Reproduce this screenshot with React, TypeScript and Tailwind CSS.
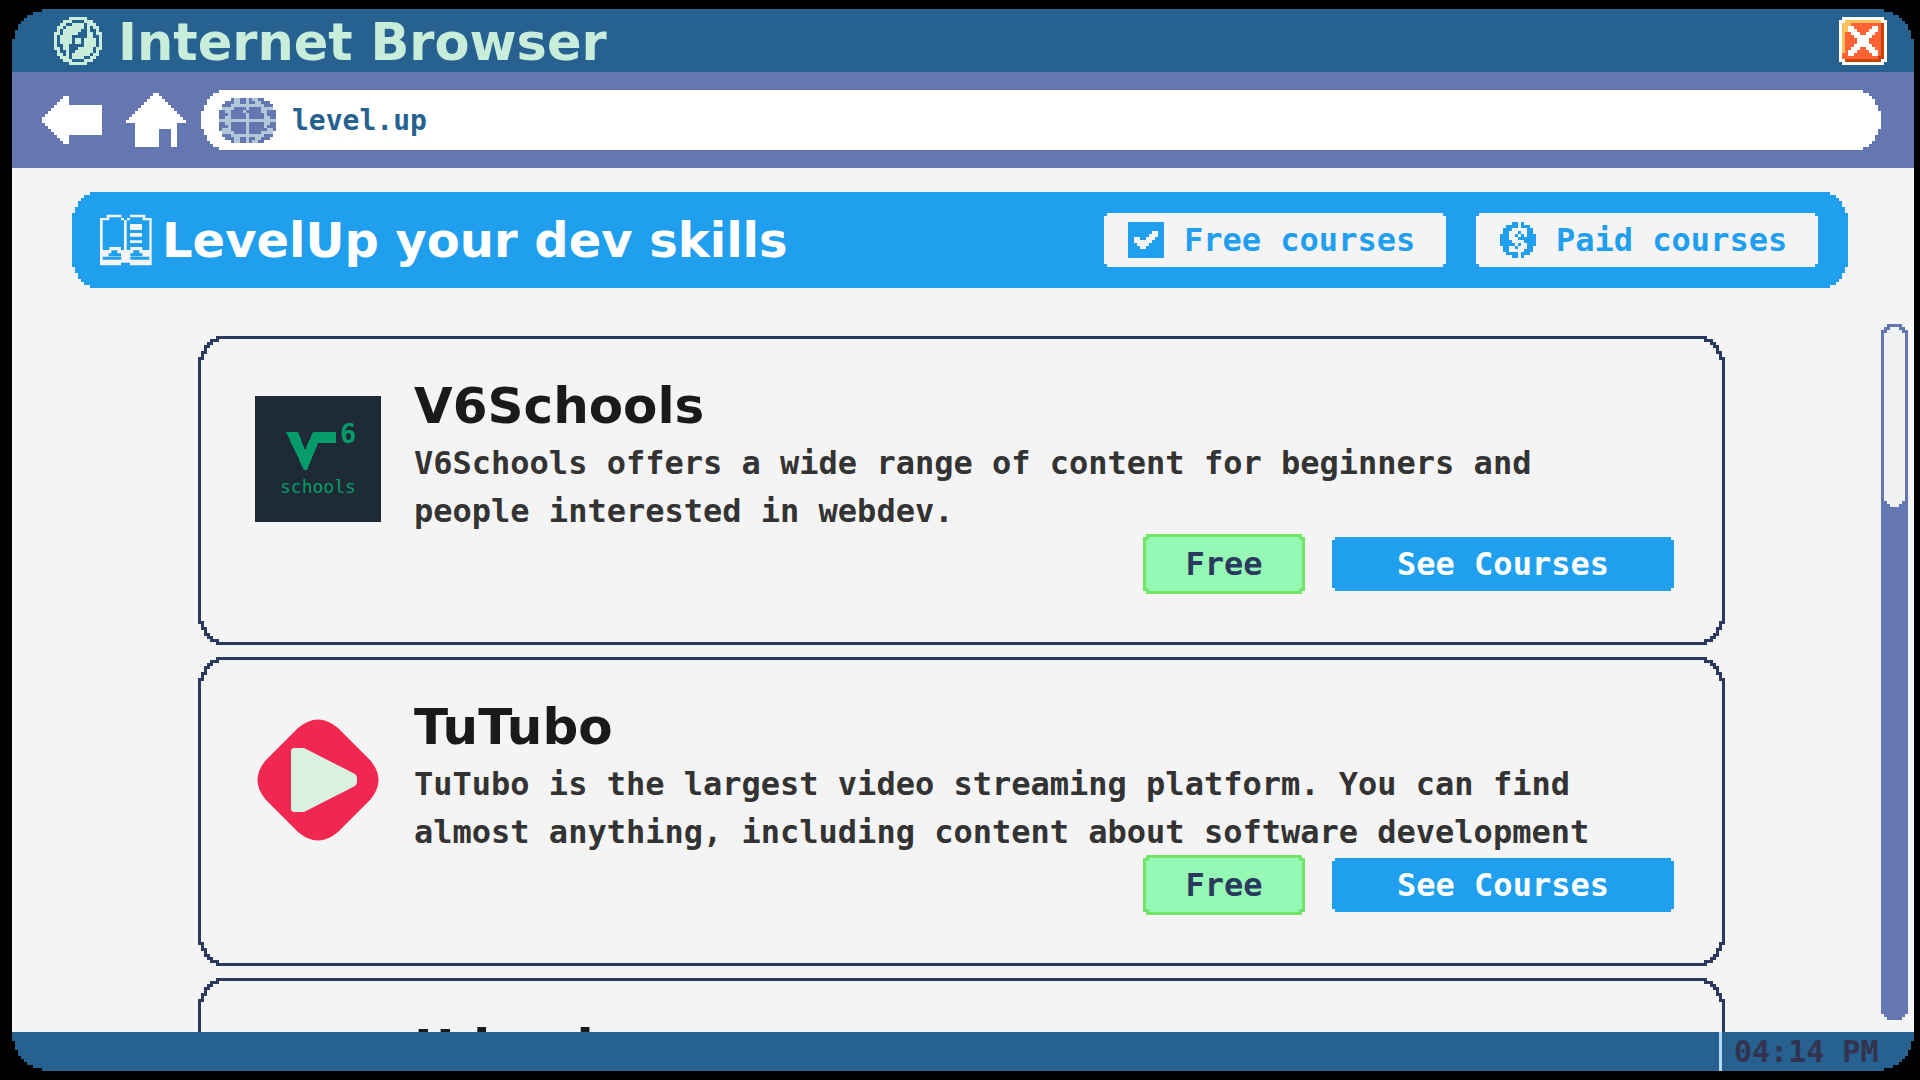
import React, { useState } from 'react';

interface Course {
    id: string;
    name: string;
    description?: string;
    price: string;
    logo?: React.ReactNode;
}

interface PixelIconProps {
    rows: string[];
    colors: Record<string, string>;
    className: string;
}

// Stepped corners, every step is a multiple of the 3px pixel unit
const WINDOW_CORNERS = '[clip-path:polygon(0_30px,3px_30px,3px_21px,6px_21px,6px_15px,9px_15px,9px_12px,12px_12px,12px_9px,15px_9px,15px_6px,21px_6px,21px_3px,30px_3px,30px_0,calc(100%-30px)_0,calc(100%-30px)_3px,calc(100%-21px)_3px,calc(100%-21px)_6px,calc(100%-15px)_6px,calc(100%-15px)_9px,calc(100%-12px)_9px,calc(100%-12px)_12px,calc(100%-9px)_12px,calc(100%-9px)_15px,calc(100%-6px)_15px,calc(100%-6px)_21px,calc(100%-3px)_21px,calc(100%-3px)_30px,100%_30px,100%_calc(100%-30px),calc(100%-3px)_calc(100%-30px),calc(100%-3px)_calc(100%-21px),calc(100%-6px)_calc(100%-21px),calc(100%-6px)_calc(100%-15px),calc(100%-9px)_calc(100%-15px),calc(100%-9px)_calc(100%-12px),calc(100%-12px)_calc(100%-12px),calc(100%-12px)_calc(100%-9px),calc(100%-15px)_calc(100%-9px),calc(100%-15px)_calc(100%-6px),calc(100%-21px)_calc(100%-6px),calc(100%-21px)_calc(100%-3px),calc(100%-30px)_calc(100%-3px),calc(100%-30px)_100%,30px_100%,30px_calc(100%-3px),21px_calc(100%-3px),21px_calc(100%-6px),15px_calc(100%-6px),15px_calc(100%-9px),12px_calc(100%-9px),12px_calc(100%-12px),9px_calc(100%-12px),9px_calc(100%-15px),6px_calc(100%-15px),6px_calc(100%-21px),3px_calc(100%-21px),3px_calc(100%-30px),0_calc(100%-30px))]';

const ROUND_CORNERS = '[clip-path:polygon(0_21px,3px_21px,3px_15px,6px_15px,6px_9px,9px_9px,9px_6px,12px_6px,12px_3px,18px_3px,18px_0,calc(100%-18px)_0,calc(100%-18px)_3px,calc(100%-12px)_3px,calc(100%-12px)_6px,calc(100%-9px)_6px,calc(100%-9px)_9px,calc(100%-6px)_9px,calc(100%-6px)_15px,calc(100%-3px)_15px,calc(100%-3px)_21px,100%_21px,100%_calc(100%-21px),calc(100%-3px)_calc(100%-21px),calc(100%-3px)_calc(100%-15px),calc(100%-6px)_calc(100%-15px),calc(100%-6px)_calc(100%-9px),calc(100%-9px)_calc(100%-9px),calc(100%-9px)_calc(100%-6px),calc(100%-12px)_calc(100%-6px),calc(100%-12px)_calc(100%-3px),calc(100%-18px)_calc(100%-3px),calc(100%-18px)_100%,18px_100%,18px_calc(100%-3px),12px_calc(100%-3px),12px_calc(100%-6px),9px_calc(100%-6px),9px_calc(100%-9px),6px_calc(100%-9px),6px_calc(100%-15px),3px_calc(100%-15px),3px_calc(100%-21px),0_calc(100%-21px))]';

const BAR_CORNERS = '[clip-path:polygon(0_6px,3px_6px,3px_3px,6px_3px,6px_0,calc(100%-6px)_0,calc(100%-6px)_3px,calc(100%-3px)_3px,calc(100%-3px)_6px,100%_6px,100%_calc(100%-6px),calc(100%-3px)_calc(100%-6px),calc(100%-3px)_calc(100%-3px),calc(100%-6px)_calc(100%-3px),calc(100%-6px)_100%,6px_100%,6px_calc(100%-3px),3px_calc(100%-3px),3px_calc(100%-6px),0_calc(100%-6px))]';

const NOTCH_CORNERS = '[clip-path:polygon(0_3px,3px_3px,3px_0,calc(100%-3px)_0,calc(100%-3px)_3px,100%_3px,100%_calc(100%-3px),calc(100%-3px)_calc(100%-3px),calc(100%-3px)_100%,3px_100%,3px_calc(100%-3px),0_calc(100%-3px))]';

const COMPASS = [
    '.....######.....',
    '...###....###...',
    '..##..####.###..',
    '.##.######.#.##.',
    '.#.######..#..#.',
    '##.#####...##.##',
    '#.####.....##..#',
    '#.####.##.####.#',
    '#.####.##.####.#',
    '#..##.....####.#',
    '##.##...#####.##',
    '.#..#..######.#.',
    '.##.#.######.##.',
    '..###.####..##..',
    '...###....###...',
    '.....######.....',
];

const ARROW = [
    '.......##...........',
    '......###...........',
    '.....####...........',
    '....################',
    '...#################',
    '..##################',
    '.###################',
    '####################',
    '####################',
    '.###################',
    '..##################',
    '...#################',
    '....################',
    '.....####...........',
    '......###...........',
    '.......##...........',
];

const HOME = [
    '.........##.........',
    '........####........',
    '.......######.......',
    '......########......',
    '.....##########.....',
    '....############....',
    '...##############...',
    '..################..',
    '.##################.',
    '####################',
    '...##############...',
    '...##############...',
    '...########....##...',
    '...########....##...',
    '...########....##...',
    '...########....##...',
    '...########....##...',
    '...########....##...',
];

const GLOBE = [
    '....olloololloo....',
    '..ooollooloollooo..',
    '.ooolllllllllllooo.',
    '.llllooooloooollll.',
    'oolloooolooooolloo',
    'ooolooooolooooolooo',
    'oollooooolooooolloo',
    'lllllllllllllllllll',
    'oollooooolooooolloo',
    'ooolooooolooooolooo',
    'ollloooooloooooollo',
    '.llllooooloooollll.',
    '.ooolllllllllllooo.',
    '..ooollooloollooo..',
    '....olloololloo....',
].map((row) => row.padEnd(19, 'o'));

const CHECK = [
    '############',
    '############',
    '############',
    '########..##',
    '#######...##',
    '##..##...###',
    '##......####',
    '###....#####',
    '####..######',
    '############',
    '############',
    '############',
];

const DOLLAR = [
    '....##.#....',
    '..####.###..',
    '.###.....##.',
    '.##...#..##.',
    '###..#.#.###',
    '###...######',
    '####....####',
    '#####.#..###',
    '.##..#...##.',
    '.##.....###.',
    '..####.###..',
    '....##.#....',
];

const CLOSE = [
    '.wwwwwwwwwwwwww.',
    'wwyyyyyyyyyyyyww',
    'wyyyoooooooooodw',
    'wyywwoooooowwodw',
    'wyywwwoooowwwodw',
    'wyoowwwoowwwoodw',
    'wyooowwwwwwooodw',
    'wyoooowwwwoooodw',
    'wyoooowwwwoooodw',
    'wyooowwwwwwooodw',
    'wyoowwwoowwwoodw',
    'wyowwwoooowwwodw',
    'woowwoooooowwodw',
    'wooooooooooooddw',
    'wwddddddddddddww',
    '.wwwwwwwwwwwwww.',
];

function PixelIcon({ rows, colors, className }: PixelIconProps) {
    return (
        <svg
            className={className}
            viewBox={`0 0 ${rows[0].length} ${rows.length}`}
            preserveAspectRatio="none"
            shapeRendering="crispEdges"
            aria-hidden="true"
        >
            {rows.map((row, y) =>
                row.split('').map((cell, x) =>
                    colors[cell] ? <rect key={`${x}-${y}`} x={x} y={y} width="1" height="1" fill={colors[cell]} /> : null
                )
            )}
        </svg>
    );
}

function BookIcon() {
    return (
        <svg className="size-[60px] shrink-0" viewBox="0 0 180 180" aria-hidden="true">
            <path
                fill="#f4f4f4"
                d="M12 24h20v-10h44v10h8v6h9v-6h9v-10h46v10h19v142H12zM20 31v89h20v-9h35v9h9V31h-9v-9H40v9zM92 31v89h11v-9h36v9h21V31h-20v-9h-38v9z"
            />
            <path fill="#f4f4f4" d="M102 42h36v18h-36zM102 69h36v11h-36zM102 91h36v8h-36z" />
            <path fill="#1f9fee" d="M46 121h18v9h11v9H38v-9h8zM112 121h18v9h9v9h-36v-9h9zM20 140h56v9H20zM103 140h57v9h-57zM75 158h27v9H75z" />
        </svg>
    );
}

function V6Logo() {
    return (
        <svg className="size-[126px]" viewBox="0 0 126 126" role="img" aria-label="V6Schools logo">
            <rect width="126" height="126" fill="#1e2a35" />
            <path fill="#059c69" shapeRendering="crispEdges" d="M31 36H43L50 54L58 36H81V47H63L52 74H49Z" />
            <text x="85" y="47" fontSize="27" fontWeight="700" fill="#059c69">6</text>
            <text x="25" y="97" fontSize="18" fill="#059c69">schools</text>
        </svg>
    );
}

function TuTuboLogo() {
    return (
        <svg className="size-[126px]" viewBox="0 0 126 126" role="img" aria-label="TuTubo logo">
            <path fill="#f02751" d="M43 11Q63 -6 83 11L115 43Q132 63 115 83L83 115Q63 132 43 115L11 83Q-6 63 11 43Z" />
            <path fill="#d9f1e0" d="M38 31H49L100 57L102 60V66L100 69L49 95H38L36 93V33Z" />
        </svg>
    );
}

const courses: Course[] = [
    {
        id: 'v6schools',
        name: 'V6Schools',
        description: 'V6Schools offers a wide range of content for beginners and people interested in webdev.',
        price: 'Free',
        logo: <V6Logo />,
    },
    {
        id: 'tutubo',
        name: 'TuTubo',
        description: 'TuTubo is the largest video streaming platform. You can find almost anything, including content about software development',
        price: 'Free',
        logo: <TuTuboLogo />,
    },
    {
        id: 'udemi',
        name: 'Udemi',
        price: 'Paid',
    },
];

function CourseCard({ course }: { course: Course }) {
    return (
        <article className={`shrink-0 bg-[#2a3a5e] p-[3px] ${ROUND_CORNERS}`}>
            <div className={`flex min-h-[303px] gap-[33px] bg-[#f4f4f4] pt-9 pr-12 pl-[54px] ${ROUND_CORNERS}`}>
                <div className="w-[126px] shrink-0 pt-[21px]">{course.logo}</div>
                <div className="flex flex-1 flex-col">
                    <h2 className="font-['DejaVu_Sans',sans-serif] text-[50px] leading-[62px] font-bold text-[#1a1a1a]">{course.name}</h2>
                    {course.description && (
                        <>
                            <p className="max-w-[1200px] pt-0.5 text-[32px] leading-[48px] font-bold text-[#333333]">{course.description}</p>
                            <div className="-mt-px flex items-center justify-end gap-[27px]">
                                <span className={`bg-[#72e468] p-[3px] ${NOTCH_CORNERS}`}>
                                    <span className={`flex h-[54px] w-[156px] items-center justify-center bg-[#95f8b4] text-[32px] font-bold text-[#2a3a5e] ${NOTCH_CORNERS}`}>
                                        {course.price}
                                    </span>
                                </span>
                                <button type="button" className={`h-[54px] w-[342px] bg-[#1f9fee] text-[32px] leading-[54px] font-bold text-white ${NOTCH_CORNERS}`}>
                                    See Courses
                                </button>
                            </div>
                        </>
                    )}
                </div>
            </div>
        </article>
    );
}

const App: React.FC = () => {
    const [address, setAddress] = useState('level.up');

    return (
        <div className="h-screen bg-black py-[9px] pr-1.5 pl-3 font-['DejaVu_Sans_Mono','Liberation_Mono',monospace]">
            <div className={`flex h-full flex-col overflow-hidden bg-[#f4f4f4] ${WINDOW_CORNERS}`}>
                {/* Title bar */}
                <header className="flex h-[63px] shrink-0 items-center gap-4 bg-[#26618f] pr-[27px] pl-[42px]">
                    <PixelIcon rows={COMPASS} colors={{ '#': '#c9eddb' }} className="size-12 shrink-0" />
                    <h1 className="flex-1 pt-1 font-['DejaVu_Sans',sans-serif] text-[51px] leading-[59px] font-bold text-[#c9eddb]">Internet Browser</h1>
                    <button type="button" aria-label="Close">
                        <PixelIcon rows={CLOSE} colors={{ w: '#ffffff', y: '#ffbf5a', o: '#ff6235', d: '#cf4300' }} className="size-12" />
                    </button>
                </header>

                {/* Toolbar */}
                <nav className="flex h-24 shrink-0 items-center bg-[#6577b1] pr-[33px] pl-[30px]">
                    <button type="button" aria-label="Back" className="mr-6">
                        <PixelIcon rows={ARROW} colors={{ '#': '#ffffff' }} className="h-12 w-[60px]" />
                    </button>
                    <button type="button" aria-label="Home" className="mr-[15px]">
                        <PixelIcon rows={HOME} colors={{ '#': '#ffffff' }} className="h-[54px] w-[60px]" />
                    </button>
                    <div className={`flex h-[60px] flex-1 items-center gap-4 bg-white px-[18px] ${ROUND_CORNERS}`}>
                        <PixelIcon rows={GLOBE} colors={{ o: '#6577b1', l: '#b2c7da' }} className="h-[45px] w-[57px] shrink-0" />
                        <input
                            type="text"
                            aria-label="Address"
                            value={address}
                            onChange={(e) => setAddress(e.target.value)}
                            className="h-12 flex-1 bg-transparent text-[28px] font-bold text-[#26618f] outline-none"
                        />
                    </div>
                </nav>

                {/* Site header */}
                <section className={`mt-6 mr-[66px] ml-[60px] flex h-24 shrink-0 items-center bg-[#1f9fee] pr-[30px] pl-6 ${ROUND_CORNERS}`}>
                    <BookIcon />
                    <h2 className="ml-1.5 flex-1 font-['DejaVu_Sans',sans-serif] text-[48px] leading-[60px] font-bold text-white">LevelUp your dev skills</h2>
                    <div className="flex gap-[30px]">
                        <button type="button" className={`flex h-[54px] w-[342px] items-center gap-5 bg-[#f4f4f4] pl-6 text-[32px] font-bold text-[#1f9fee] ${NOTCH_CORNERS}`}>
                            <PixelIcon rows={CHECK} colors={{ '#': '#1f9fee' }} className="size-9 shrink-0" />
                            Free courses
                        </button>
                        <button type="button" className={`flex h-[54px] w-[342px] items-center gap-5 bg-[#f4f4f4] pl-6 text-[32px] font-bold text-[#1f9fee] ${NOTCH_CORNERS}`}>
                            <PixelIcon rows={DOLLAR} colors={{ '#': '#1f9fee' }} className="size-9 shrink-0" />
                            Paid courses
                        </button>
                    </div>
                </section>

                {/* Course list */}
                <main className="mt-9 flex min-h-0 flex-1 gap-[156px] overflow-hidden pr-1.5 pl-[186px]">
                    <div className="flex flex-1 flex-col gap-3 overflow-hidden pt-3">
                        {courses.map((course) => (
                            <CourseCard key={course.id} course={course} />
                        ))}
                    </div>
                    <div className={`mb-3 w-[27px] bg-[#6577b1] p-[3px] ${BAR_CORNERS}`}>
                        <div className={`h-[180px] bg-[#eff1f3] ${BAR_CORNERS}`} />
                    </div>
                </main>

                {/* Status bar */}
                <footer className="flex h-[39px] shrink-0 justify-end bg-[#26618f]">
                    <time className="w-[195px] border-l-[3px] border-[#b5d9f7] pl-3 text-[30px] leading-[39px] font-bold text-[#333350]">04:14 PM</time>
                </footer>
            </div>
        </div>
    );
};

export default App;
